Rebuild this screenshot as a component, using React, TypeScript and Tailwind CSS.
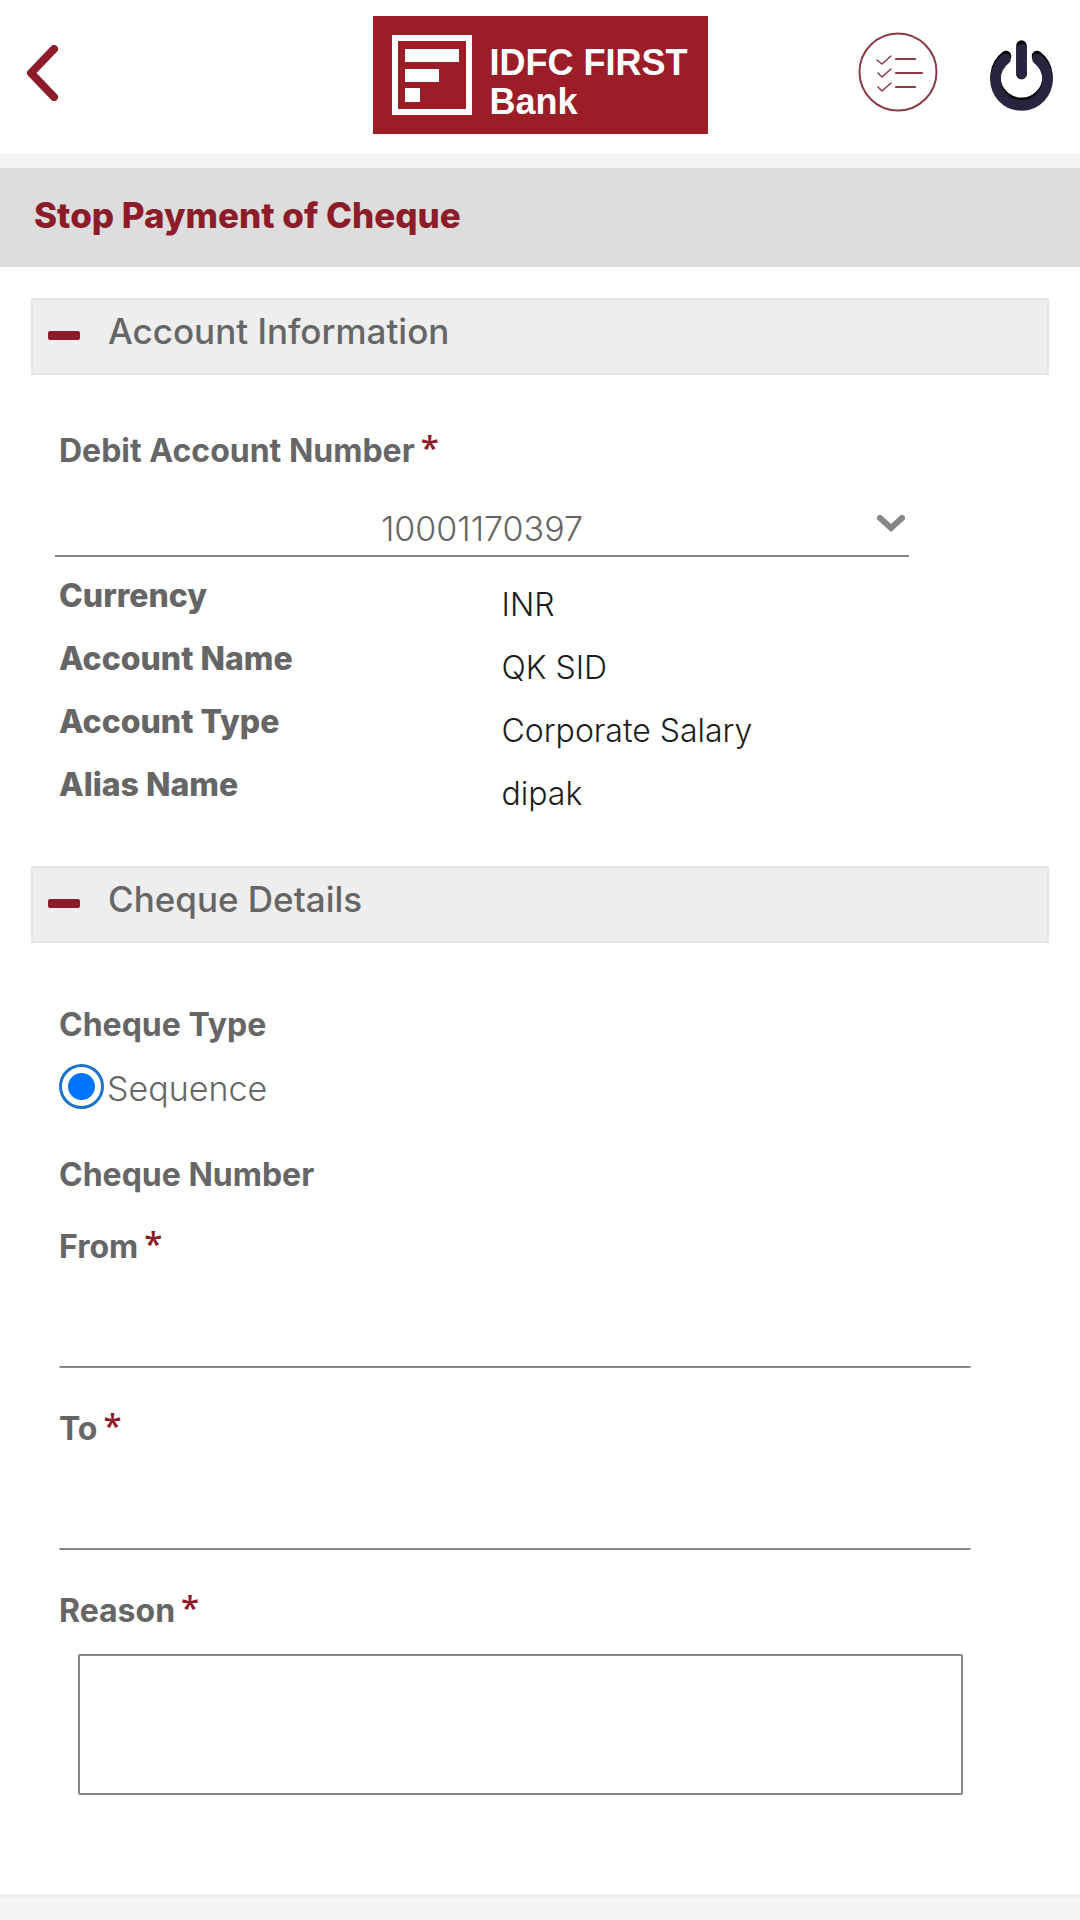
import { useState } from 'react';
import type { ReactNode } from 'react';

const ACCOUNT = [
  { label: 'Currency', value: 'INR' },
  { label: 'Account Name', value: 'QK SID' },
  { label: 'Account Type', value: 'Corporate Salary' },
  { label: 'Alias Name', value: 'dipak' },
];

function Logo() {
  return (
    <div className="flex h-[118px] w-[335px] items-center gap-[18px] bg-[#9b1d27] pl-[19px] text-white">
      <svg viewBox="0 0 80 80" className="h-20 w-20 shrink-0" aria-hidden="true">
        <rect x="3" y="3" width="74" height="74" fill="none" stroke="currentColor" strokeWidth="6" />
        <path d="M13 14h54v13H13zM13 34h34v13H13zM13 53h15v14H13z" fill="currentColor" />
      </svg>
      <div className="pt-3.5 font-['Liberation_Sans',Arial,sans-serif] text-[36px] leading-[39px] font-bold whitespace-nowrap">
        <p>IDFC FIRST</p>
        <p>Bank</p>
      </div>
    </div>
  );
}

function Header() {
  return (
    <header className="flex h-[154px] items-start justify-between bg-white pt-4 pr-[27px] pl-[27px]">
      <div className="flex flex-1 pt-[29px]">
        <button aria-label="Back" className="cursor-pointer">
          <svg viewBox="0 0 32 56" className="h-14 w-8" fill="none" stroke="#8d1c2b" strokeWidth="8" strokeLinecap="round" strokeLinejoin="round">
            <path d="M27 4 4 28l23 24" />
          </svg>
        </button>
      </div>
      <Logo />
      <div className="flex flex-1 items-start justify-end gap-[52px] pt-4">
        <button aria-label="Tasks" className="cursor-pointer">
          <svg viewBox="0 0 80 80" className="h-20 w-20" fill="none" stroke="#8a3a48" strokeLinecap="round" strokeLinejoin="round">
            <circle cx="40" cy="40" r="38.5" strokeWidth="2" />
            <path d="m19 28 5 4 9-8M20 41l4 4 9-8M20 55l4 4 9-8" strokeWidth="1.5" />
            <path d="M38 27h19M38 41h26M38 55h19" strokeWidth="2.2" />
          </svg>
        </button>
        <button aria-label="Log out" className="cursor-pointer pt-2">
          <svg viewBox="0 0 63 71" className="h-[71px] w-[63px]" fill="none" strokeWidth="10.5" strokeLinecap="round">
            <g stroke="#050508">
              <path d="M16 16A26 26 0 1 0 47 16" />
              <path d="M31.5 5.500V34" />
            </g>
            <g stroke="#28243d">
              <path d="M15.500 19A26 26 0 1 0 47.500 19" />
              <path d="M31.5 9V34" />
            </g>
          </svg>
        </button>
      </div>
    </header>
  );
}

function SectionHeader({ title }: { title: string }) {
  return (
    <h2>
      <button className="flex w-full cursor-pointer items-start gap-7 border-2 border-[#e6e6e6] bg-[#eee] pt-[11px] pb-[22px] pl-[15px] text-left">
        <span className="mt-5 h-[9px] w-8 shrink-0 rounded-xs bg-[#8d1c2b]" />
        <span className="text-[35px] leading-[40px] font-medium">{title}</span>
      </button>
    </h2>
  );
}

function Label({ htmlFor, children }: { htmlFor: string; children: ReactNode }) {
  return (
    <label htmlFor={htmlFor} className="flex text-[32px] leading-[40px] font-bold">
      {children}
      <span className="pl-1.5 font-['Open_Sans',sans-serif] text-[33px] leading-[34px] font-semibold text-[#8d1c2b]">*</span>
    </label>
  );
}

function LineInput({ id, label }: { id: string; label: string }) {
  return (
    <div>
      <Label htmlFor={id}>{label}</Label>
      <input id={id} type="text" className="block h-[101px] w-full rounded-xs border-b-2 border-[#868686] bg-transparent pt-8 text-[32px] outline-none" />
    </div>
  );
}

export default function App() {
  const [account, setAccount] = useState('10001170397');

  return (
    <div className="min-h-screen bg-white font-['Inter','Liberation_Sans',sans-serif] text-[#666]">
      <Header />
      <div className="bg-[#f5f5f5] pt-3.5">
        <div className="bg-[#ddd] px-[34px] pt-[27px] pb-8">
          <h1 className="text-[35px] leading-[40px] font-extrabold text-[#8d1c2b]">Stop Payment of Cheque</h1>
        </div>
      </div>

      <form className="px-[31px] pt-[31px] pb-[99px]">
        <SectionHeader title="Account Information" />
        <div className="px-7 pt-14 pb-10">
          <Label htmlFor="account">Debit Account Number</Label>
          <div className="relative mt-[26px] mr-[112px] -ml-1">
            <select id="account" value={account} onChange={e => setAccount(e.target.value)}
              className="h-[60px] w-full cursor-pointer appearance-none border-b-2 border-[#868686] bg-transparent pt-1 text-center text-[34px] font-light outline-none [text-align-last:center]">
              <option value="10001170397">10001170397</option>
            </select>
            <svg viewBox="0 0 28 17" className="pointer-events-none absolute top-[18px] right-1 h-[17px] w-7" fill="none" stroke="#868686" strokeWidth="6" strokeLinecap="round">
              <path d="m3 3 11 10L25 3" />
            </svg>
          </div>

          <dl className="mt-[17px]">
            {ACCOUNT.map(row => (
              <div key={row.label} className="grid h-[63px] grid-cols-[46%_1fr] text-[32px] leading-[44px]">
                <dt className="font-extrabold">{row.label}</dt>
                <dd className="pt-[9px] font-light text-[#1c1c1c]">{row.value}</dd>
              </div>
            ))}
          </dl>
        </div>

        <SectionHeader title="Cheque Details" />
        <div className="pt-[62px] pr-[78px] pl-7">
          <fieldset>
            <legend className="text-[32px] leading-[40px] font-bold">Cheque Type</legend>
            <label className="mt-[17px] flex items-center gap-[3px] text-[34px] leading-[45px] font-light">
              <input type="radio" name="chequeType" defaultChecked
                className="h-[45px] w-[45px] appearance-none rounded-full border-[3px] border-[#1f74c9] bg-[#0075ff] bg-clip-content p-1.5" />
              <span className="pt-1">Sequence</span>
            </label>
          </fieldset>

          <h3 className="mt-11 text-[32px] leading-[40px] font-bold">Cheque Number</h3>
          <div className="mt-8 flex flex-col gap-[41px]">
            <LineInput id="from" label="From" />
            <LineInput id="to" label="To" />
            <div>
              <Label htmlFor="reason">Reason</Label>
              <div className="mt-[23px] pr-2 pl-[19px]">
                <textarea id="reason" className="block h-[141px] w-full resize-none rounded-xs border-2 border-[#868686] bg-transparent p-2 text-[32px] outline-none" />
              </div>
            </div>
          </div>
        </div>
      </form>
      <footer className="h-[26px] border-t-3 border-[#eee] bg-[#f5f5f5]" />
    </div>
  );
}
